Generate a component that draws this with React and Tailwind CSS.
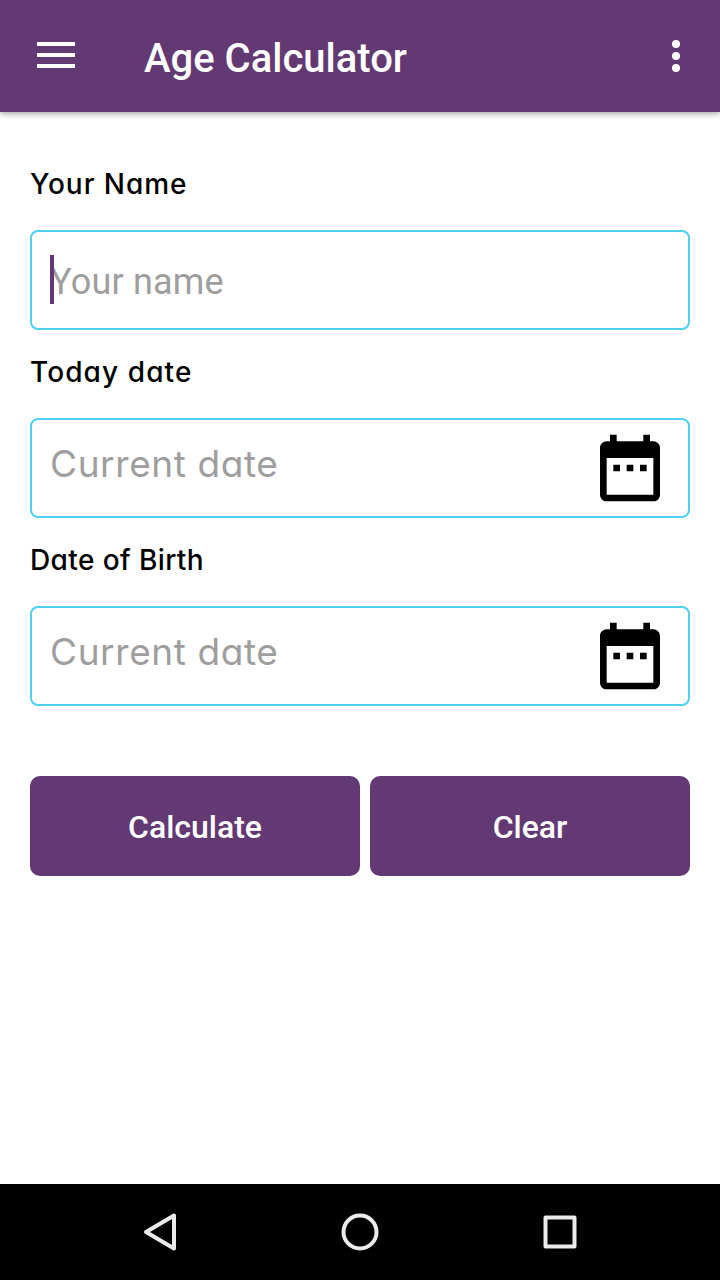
import React from "react";

// cv11 is Inter's single-storey "a"
const labelClass =
  "flex h-[43px] items-center whitespace-nowrap font-['Inter',sans-serif] text-[28px] font-medium text-black [font-feature-settings:'cv11']";

function CalendarIcon() {
  return (
    <svg viewBox="0 0 24 24" className="h-20 w-20" fill="#000">
      <path d="M9 11H7v2h2v-2zm4 0h-2v2h2v-2zm4 0h-2v2h2v-2zm2-7h-1V2h-2v2H8V2H6v2H5c-1.11 0-2 .9-2 2v14c0 1.1.89 2 2 2h14c1.1 0 2-.9 2-2V6c0-1.1-.9-2-2-2zm0 16H5V9h14v11z" />
    </svg>
  );
}

function AppBar() {
  return (
    <header className="flex h-28 items-center bg-[#633974] shadow-[0_2px_6px_rgba(0,0,0,0.35)]">
      <svg viewBox="0 0 38 26" className="mb-0.5 ml-[37px] h-[26px] w-[38px]" fill="#fff">
        <path d="M0 0h38v4H0zM0 11h38v4H0zM0 22h38v4H0z" />
      </svg>
      <h1 className="ml-[69px] mt-1.5 whitespace-nowrap text-[40px] font-medium leading-[48px] text-white">
        Age Calculator
      </h1>
      <svg viewBox="0 0 8 32" className="ml-auto mr-10 h-8 w-2" fill="#fff">
        <circle cx="4" cy="4" r="4" />
        <circle cx="4" cy="16" r="4" />
        <circle cx="4" cy="28" r="4" />
      </svg>
    </header>
  );
}

function DateField({ label, labelSpacing }) {
  return (
    <div>
      <div className={`${labelClass} ${labelSpacing}`}>{label}</div>
      <button className="mt-[25px] flex h-[100px] w-full items-center justify-between rounded-lg border-2 border-[#4fd0f0] px-[18px]">
        <span className="mb-2 whitespace-nowrap font-['Inter',sans-serif] text-[37px] leading-[48px] tracking-[0.6px] text-[#9e9e9e] [font-feature-settings:'cv11']">
          Current date
        </span>
        <CalendarIcon />
      </button>
    </div>
  );
}

function NavBar() {
  return (
    <nav className="flex h-24 items-center justify-center gap-[120px] bg-black">
      <svg viewBox="0 0 80 80" className="h-20 w-20" fill="none" stroke="#ebebeb" strokeWidth="4" strokeLinejoin="round">
        <path d="M54 23.5v33L26 40z" />
      </svg>
      <svg viewBox="0 0 80 80" className="h-20 w-20" fill="none" stroke="#ebebeb" strokeWidth="4">
        <circle cx="40" cy="40" r="16.5" />
      </svg>
      <svg viewBox="0 0 80 80" className="h-20 w-20" fill="none" stroke="#ebebeb" strokeWidth="4" strokeLinejoin="round">
        <rect x="25.5" y="25.5" width="29" height="29" />
      </svg>
    </nav>
  );
}

function App() {
  return (
    <div className="flex h-screen w-full flex-col bg-white font-['Roboto',sans-serif]">
      <AppBar />

      <main className="flex flex-1 flex-col px-[30px] pt-[50px]">
        <div className="flex flex-col gap-5">
          <div>
            <div className={`${labelClass} tracking-[0.95px]`}>Your Name</div>
            <div className="mt-[25px] flex h-[100px] items-center rounded-lg border-2 border-[#4fd0f0] pl-[18px]">
              <span className="relative mt-1 whitespace-nowrap text-[36px] leading-[48px] tracking-[0.2px] text-[#9e9e9e]">
                Your name
                {/* text cursor */}
                <span className="absolute left-0 -top-[3px] h-[49px] w-1 bg-[#633974]" />
              </span>
            </div>
          </div>
          <DateField label="Today date" labelSpacing="tracking-[1.1px]" />
          <DateField label="Date of Birth" labelSpacing="tracking-[0.4px]" />
        </div>

        <div className="mt-[70px] flex gap-2.5">
          <button className="h-[100px] w-[330px] rounded-[10px] bg-[#633974] pt-0.5 text-[32px] font-medium text-white">
            Calculate
          </button>
          <button className="h-[100px] w-80 rounded-[10px] bg-[#633974] pt-0.5 text-[32px] font-medium text-white">
            Clear
          </button>
        </div>
      </main>

      <NavBar />
    </div>
  );
}

export default App;
